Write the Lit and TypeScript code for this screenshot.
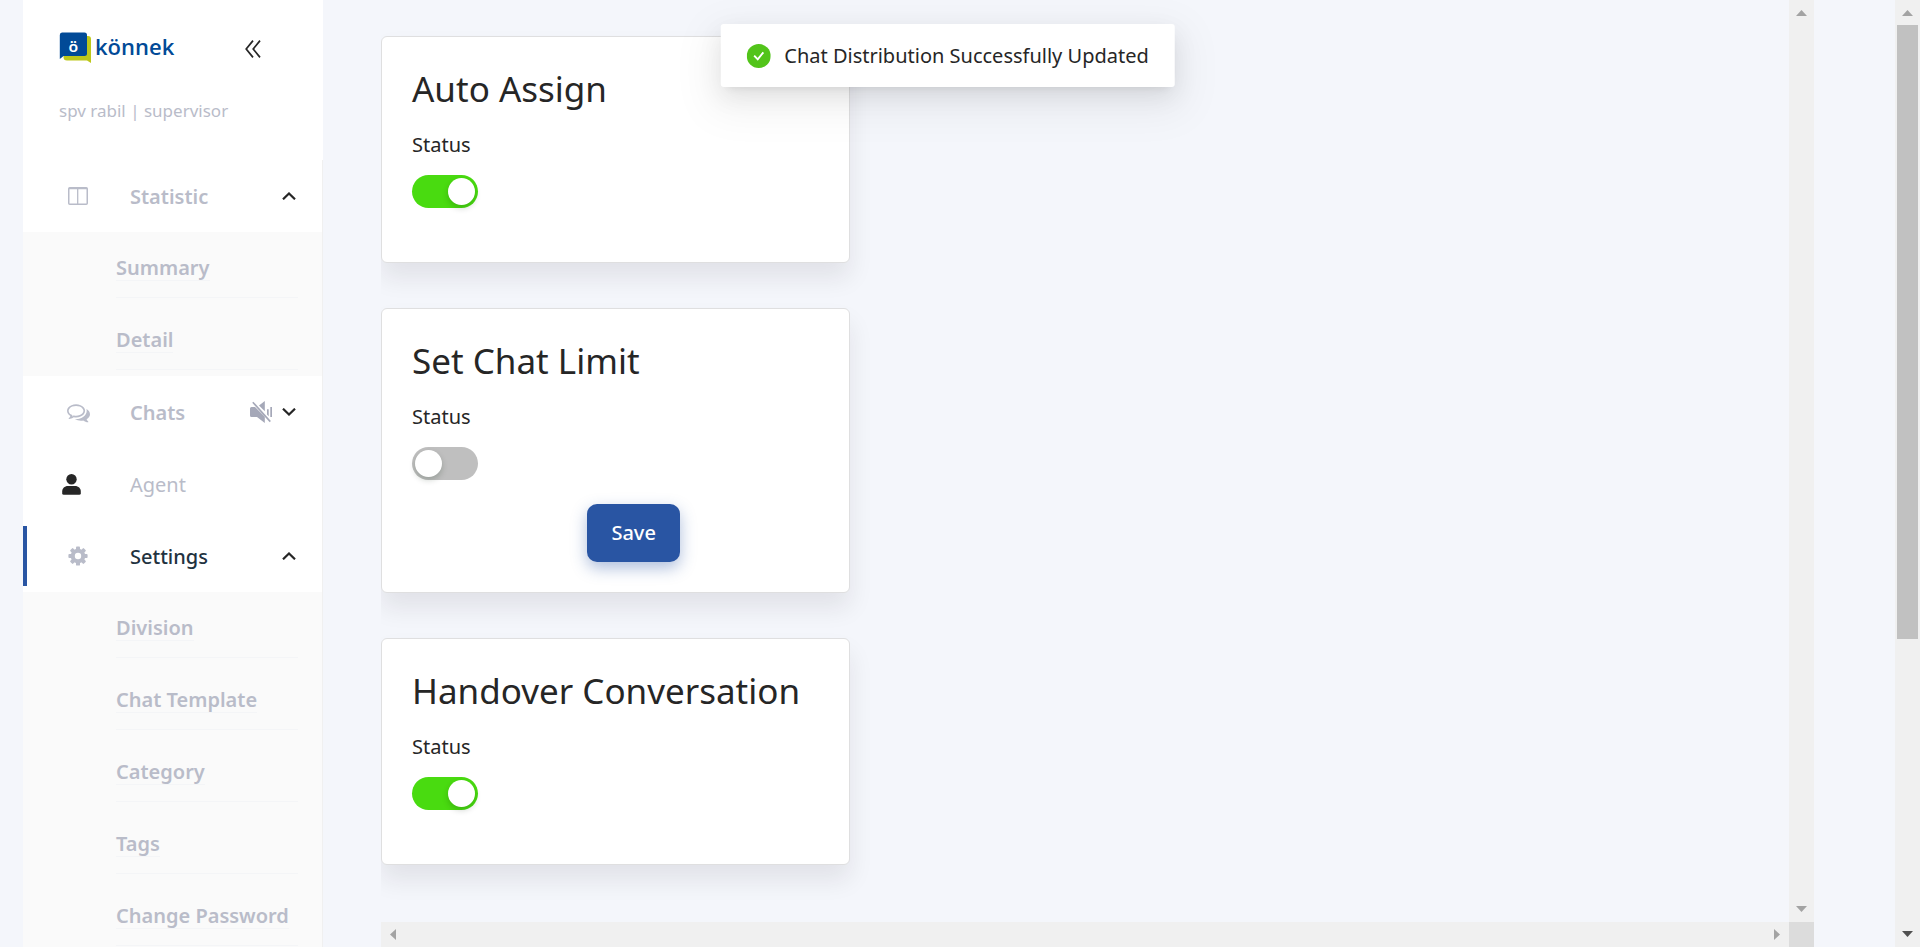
import { LitElement, html, css, svg, nothing } from "lit";
import { customElement, property, state } from "lit/decorators.js";
import { classMap } from "lit/directives/class-map.js";

const icons = {
  layout: svg`<svg width="20" height="18" viewBox="0 0 20 18" fill="none" stroke="#b9bcc9" aria-hidden="true">
    <rect x="0.75" y="0.75" width="18.5" height="16.5" rx="1" stroke-width="1.5"/>
    <path d="M1 1.5H19" stroke-width="1.5"/><path d="M9.7 1V17" stroke-width="1.3"/></svg>`,
  chats: svg`<svg width="23" height="23" viewBox="0 0 1792 1792" fill="#b9bcc9" aria-hidden="true"><path d="M704 384q-153 0-286 52t-211.500 141-78.500 191q0 82 53 158t149 132l97 56-35 84q34-20 62-39l44-31 53 10q78 14 153 14 153 0 286-52t211.500-141 78.500-191-78.500-191-211.500-141-286-52zm0-128q191 0 353.500 68.500t256.500 186.500 94 257-94 257-256.500 186.500-353.500 68.500q-86 0-176-16-124 88-278 128-36 9-86 16h-3q-11 0-20.500-8t-11.500-21q-1-3-1-6.500t.5-6.500 2-6l2.500-5 3.500-5.500 4-5 4.500-5 4-4.500q5-6 23-25t26-29.500 22.500-29 25-38.500 20.500-44q-124-72-195-177t-71-224q0-139 94-257t256.500-186.500 353.500-68.500zm822 1169q10 24 20.500 44t25 38.500 22.500 29 26 29.500 23 25q1 1 4 4.500t4.500 5 4 5 3.500 5.500l2.500 5 2 6 .5 6.500-1 6.500q-3 14-13 22t-22 7q-50-7-86-16-154-40-278-128-90 16-176 16-271 0-472-132 58 4 88 4 161 0 309-45t264-129q125-92 192-212t67-254q0-77-23-152 129 71 204 178t75 230q0 120-71 224.500t-195 176.500z"/></svg>`,
  agent: svg`<svg width="19" height="21" viewBox="0 0 19 21" fill="#262626" aria-hidden="true">
    <circle cx="9.500" cy="5.300" r="5.200"/><path d="M6 12H13C16.500 12 18.800 14.400 18.800 17.500V19.200Q18.800 20.800 17.200 20.800H1.800Q.2 20.800 .2 19.200V17.500C.2 14.400 2.500 12 6 12Z"/></svg>`,
  gear: svg`<svg width="20" height="20" viewBox="-10 -10 20 20" aria-hidden="true">
    <g fill="#b9bcc9">${[0, 45, 90, 135].map(
      (a) => svg`<rect x="-2" y="-9.600" width="4" height="19.200" rx="0.900" transform="rotate(${a})"/>`
    )}<circle r="7.300"/></g><circle r="3.200" fill="#fff"/></svg>`,
  muted: svg`<svg width="22" height="22" viewBox="0 0 22 22" fill="#a5a8b8" aria-hidden="true">
    <path d="M1.500 6H5L14.800 15.800V22L7 16H1.500Q0 16 0 14.500V7.500Q0 6 1.500 6Z"/>
    <path d="M9 4.600L14.800 0V10.200Z"/>
    <path d="M17 8.200H18.700V15.200L17 13.500ZM20.300 6H22V16H20.300Z"/>
    <path d="M2.800 1.200L20.300 20.600" stroke="#a5a8b8" stroke-width="1.600"/></svg>`,
  up: svg`<svg width="14" height="8" viewBox="0 0 14 8" fill="none" stroke="#262626" stroke-width="2.200" aria-hidden="true"><path d="M1 7.300L7 1.500L13 7.300"/></svg>`,
  down: svg`<svg width="14" height="8" viewBox="0 0 14 8" fill="none" stroke="#262626" stroke-width="2.200" aria-hidden="true"><path d="M1 .7L7 6.500L13 .7"/></svg>`,
  collapse: svg`<svg width="16" height="18" viewBox="0 0 16 18" fill="none" stroke="#262626" stroke-width="1.700" aria-hidden="true"><path d="M8 .6L1.200 9L8 17.400M15 .6L8.200 9L15 17.400"/></svg>`,
  success: svg`<svg width="24" height="24" viewBox="0 0 24 24" aria-hidden="true"><circle cx="12" cy="12" r="12" fill="#52c41a"/><path d="M7.400 11.600L11 15.400L16.600 8.400" fill="none" stroke="#fff" stroke-width="1.900"/></svg>`,
};

const FONT = css`"Noto Sans", "Open Sans", sans-serif`;

@customElement("scroll-track")
class ScrollTrack extends LitElement {
  @property() axis = "vertical";
  @property({ type: Number }) thumb = 0;
  @property({ type: Boolean }) more = false;

  static styles = css`
    :host { display: flex; background: #f0f0f0; flex: none; }
    .track { display: flex; flex: 1; flex-direction: column; align-items: center; min-height: 0; }
    .track.horizontal { flex-direction: row; }
    .cap { flex: none; width: 25px; height: 25px; }
    .rail { flex: 1; display: flex; justify-content: center; min-height: 0; }
    .thumb { width: 21px; background: #c1c1c1; }
  `;

  render() {
    const h = this.axis === "horizontal";
    const start = h ? "M15 7V18L9 12.500Z" : "M7 16H18L12.500 10Z";
    const end = h ? "M10 7V18L16 12.500Z" : "M7 9H18L12.500 15Z";
    return html`<div class=${classMap({ track: true, horizontal: h })} aria-hidden="true">
      <svg class="cap" viewBox="0 0 25 25" fill="#a3a3a3"><path d=${start}></path></svg>
      <div class="rail">
        ${this.thumb ? html`<div class="thumb" style="height:${this.thumb}%"></div>` : nothing}
      </div>
      <svg class="cap" viewBox="0 0 25 25" fill=${this.more ? "#505050" : "#a3a3a3"}><path d=${end}></path></svg>
    </div>`;
  }
}

@customElement("setting-card")
class SettingCard extends LitElement {
  @property() heading = "";
  @property({ type: Boolean }) on = false;
  @property({ type: Boolean }) savable = false;

  static styles = css`
    :host { display: block; }
    .card {
      box-sizing: border-box; padding: 30px; background: #fff;
      border: 1px solid #dfdfe0; border-radius: 6px;
      box-shadow: 0 15px 24px rgba(40, 20, 30, 0.085);
    }
    h2 { margin: 0 0 18px; font-size: 35px; line-height: 43px; font-weight: 400; color: #262626; white-space: nowrap; }
    label { display: block; font-size: 20px; line-height: 34px; margin-bottom: 13px; color: #262626; }
    .switch {
      appearance: none; display: block; box-sizing: border-box; margin: 0 0 24px; padding: 3px;
      width: 66px; height: 33px; border-radius: 17px; background: #bfbfbf; cursor: pointer;
    }
    .switch::before {
      content: ""; display: block; width: 27px; height: 27px; border-radius: 50%;
      background: #fff; box-shadow: 0 3px 6px rgba(0, 35, 11, 0.2);
    }
    .switch:checked { background: #49db10; }
    .switch:checked::before { margin-left: auto; }
    .actions { display: flex; justify-content: center; padding-left: 36px; }
    button {
      font: 500 20px/24px ${FONT}; color: #fff; background: #2955a3; border: 0; border-radius: 10px;
      padding: 17px 24px; box-shadow: 0 6px 16px rgba(41, 85, 163, 0.38); cursor: pointer;
    }
  `;

  render() {
    return html`<section class="card">
      <h2>${this.heading}</h2>
      <label for="status">Status</label>
      <input id="status" class="switch" type="checkbox" role="switch" .checked=${this.on} />
      ${this.savable ? html`<div class="actions"><button type="button">Save</button></div>` : nothing}
    </section>`;
  }
}

@customElement("side-menu")
class SideMenu extends LitElement {
  @state() private settingsLinks = ["Division", "Chat Template", "Category", "Tags", "Change Password"];

  static styles = css`
    :host { display: flex; flex-direction: column; width: 300px; flex: none; background: #fff; overflow: hidden; }
    .head { flex: none; box-sizing: border-box; height: 160px; padding: 32px 36px 0; }
    .brand { display: flex; align-items: flex-start; justify-content: space-between; }
    .logo { display: flex; gap: 3px; text-decoration: none; }
    .word { font: 600 22px/28px "Open Sans", sans-serif; color: #014a97; }
    .mark-text { font: 700 16px Lato, sans-serif; }
    .user { margin-top: 34px; font-size: 17px; line-height: 26px; color: #b9bcc9; }
    button { font: inherit; color: inherit; background: none; border: 0; padding: 0; cursor: pointer; }
    .collapse { display: flex; padding: 8px 26px 0 0; }
    nav { flex: 1; min-height: 0; display: flex; flex-direction: column; border-right: 1px solid #f0f0f0; }
    ul { list-style: none; margin: 0; padding: 0; }
    .row {
      display: flex; flex: none; align-items: center; box-sizing: border-box; width: 100%; height: 60px; margin: 6px 0;
      padding: 0 26px 0 35px; border-left: 4px solid transparent; color: #b9bcc9;
      font-size: 20px; font-weight: 600; text-align: left; text-decoration: none;
    }
    .active { border-color: #2955a3; color: #223240; font-weight: 500; }
    .plain { font-weight: 400; }
    .icon { display: flex; justify-content: center; width: 32px; margin-right: 36px; }
    .plain .icon { justify-content: flex-start; }
    .label { flex: 1; }
    .end { display: flex; align-items: center; gap: 10px; }
    .end > button { display: flex; }
    .sub { flex: none; background: #fafafa; padding: 6px 0; display: flex; flex-direction: column; gap: 12px; }
    .sub li {
      box-sizing: border-box; height: 60px; margin: 0 24px 0 93px; padding-top: 2px;
      border-bottom: 1px solid #f4f5f7; display: flex; align-items: center;
    }
    .sub a {
      font-size: 20px; line-height: 24px; font-weight: 600; color: #b9bcc9; text-decoration: none;
      border-bottom: 1px solid #f4f5f7; white-space: nowrap;
    }
  `;

  private sub(items: string[]) {
    return html`<ul class="sub">${items.map((t) => html`<li><a href="#">${t}</a></li>`)}</ul>`;
  }

  render() {
    return html`
      <div class="head">
        <div class="brand">
          <a class="logo" href="#" aria-label="könnek">
            <svg width="33" height="32" viewBox="0 0 33 32" aria-hidden="true">
              <path d="M6 4H29Q32 4 32 7V31L28 28.500H8Q4.500 28.500 4.500 25Z" fill="#bdc71b"/>
              <path d="M3 .5H25.500Q28 .5 28 3V21.500Q28 24 25.500 24H4.500L.8 27V3Q.8 .5 3 .5Z" fill="#014a97"/>
              <text class="mark-text" x="14.300" y="19.500" text-anchor="middle" fill="#fff">ö</text>
            </svg>
            <span class="word">könnek</span>
          </a>
          <button class="collapse" type="button" aria-label="Collapse menu">${icons.collapse}</button>
        </div>
        <div class="user">spv rabil | supervisor</div>
      </div>
      <nav>
        <button class="row" type="button" aria-expanded="true">
          <span class="icon">${icons.layout}</span><span class="label">Statistic</span>${icons.up}
        </button>
        ${this.sub(["Summary", "Detail"])}
        <div class="row">
          <span class="icon">${icons.chats}</span><span class="label">Chats</span>
          <span class="end">
            <button type="button" aria-label="Unmute">${icons.muted}</button>
            <button type="button" aria-label="Expand chats">${icons.down}</button>
          </span>
        </div>
        <a class="row plain" href="#"><span class="icon">${icons.agent}</span><span class="label">Agent</span></a>
        <button class="row active" type="button" aria-expanded="true">
          <span class="icon">${icons.gear}</span><span class="label">Settings</span>${icons.up}
        </button>
        ${this.sub(this.settingsLinks)}
      </nav>
    `;
  }
}

@customElement("app-root")
class AppRoot extends LitElement {
  static styles = css`
    :host {
      display: flex; height: 100vh; overflow: hidden; background: #f4f6fb; position: relative;
      font-family: ${FONT}; color: #262626;
    }
    .page { display: flex; flex: 1; min-width: 0; padding: 0 81px 0 23px; position: relative; }
    .panel {
      flex: 1; min-width: 0; margin-left: 58px; display: grid;
      grid-template-columns: minmax(0, 1fr) 25px; grid-template-rows: minmax(0, 1fr) 25px;
    }
    .view { overflow: hidden; padding-top: 36px; }
    .cards { display: grid; gap: 45px; width: 33.333%; }
    .corner { background: #dcdcdc; }
    .toast {
      position: absolute; top: 24px; left: 50%; transform: translateX(-50%);
      display: flex; align-items: center; gap: 14px; padding: 15px 26px; border-radius: 3px;
      background: #fff; font-size: 20px; line-height: 33px; white-space: nowrap;
      box-shadow: 0 5px 9px -6px rgba(0, 0, 0, 0.12), 0 9px 24px rgba(0, 0, 0, 0.08), 0 14px 42px 12px rgba(0, 0, 0, 0.05);
    }
    .toast svg { display: block; }
  `;

  render() {
    return html`
      <div class="page">
        <side-menu></side-menu>
        <main class="panel">
          <div class="view">
            <div class="cards">
              <setting-card heading="Auto Assign" on></setting-card>
              <setting-card heading="Set Chat Limit" savable></setting-card>
              <setting-card heading="Handover Conversation" on></setting-card>
            </div>
          </div>
          <scroll-track></scroll-track>
          <scroll-track axis="horizontal"></scroll-track>
          <div class="corner"></div>
        </main>
        <div class="toast" role="status">${icons.success}<span>Chat Distribution Successfully Updated</span></div>
      </div>
      <scroll-track thumb="68.400" more></scroll-track>
    `;
  }
}
